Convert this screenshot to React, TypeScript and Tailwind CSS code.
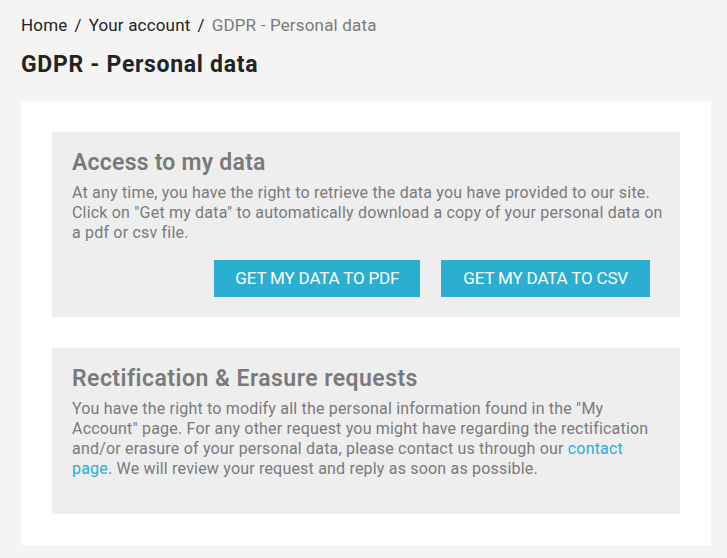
import React from 'react'

const btn =
  'h-[37px] bg-[#2aafd3] px-[21px] text-[17px] uppercase text-white tracking-[-0.01em]'

export default function App() {
  return (
    <div className="min-h-[558px] bg-[#f4f4f4] px-[21px] pt-[14px] font-['Roboto',sans-serif]">
      <nav className="flex items-center text-[17px] leading-[22px] tracking-[0.01em] text-[#232323]">
        <span>Home</span>
        <span className="mx-[7px]">/</span>
        <span>Your account</span>
        <span className="mx-[7px]">/</span>
        <span className="text-[#7a7a7a]">GDPR - Personal data</span>
      </nav>
      <h1 className="mt-[15px] text-[23px] font-bold leading-[28px] tracking-[0.03em] text-[#232323]">
        GDPR - Personal data
      </h1>
      <div className="mt-[22px] w-[690px] bg-white p-[31px] pr-[31px]">
        <section className="bg-[#eeeeee] pb-[20px] pl-[20px] pr-[16px] pt-[17px]">
          <h2 className="text-[23px] font-semibold leading-[28px] tracking-[0.01em] text-[#7a7a7a]">
            Access to my data
          </h2>
          <p className="mt-[6px] text-[16px] leading-[20px] tracking-[0.012em] text-[#7a7a7a]">
            At any time, you have the right to retrieve the data you have provided to our site.
            Click on "Get my data" to automatically download a copy of your personal data on a
            pdf or csv file.
          </p>
          <div className="mt-[17px] flex justify-end gap-[21px] pr-[14px]">
            <button className={btn}>Get my data to PDF</button>
            <button className={`${btn} px-[22px]`}>Get my data to CSV</button>
          </div>
        </section>
        <section className="mt-[31px] h-[166px] bg-[#eeeeee] pl-[20px] pr-[16px] pt-[17px]">
          <h2 className="text-[23px] font-semibold leading-[28px] tracking-[0.02em] text-[#7a7a7a]">
            Rectification &amp; Erasure requests
          </h2>
          <p className="mt-[6px] text-[16px] leading-[20px] tracking-[0.012em] text-[#7a7a7a]">
            You have the right to modify all the personal information found in the "My
            <br />
            Account" page. For any other request you might have regarding the rectification
            and/or erasure of your personal data, please contact us through our{' '}
            <a className="text-[#24b0d4]">contact page</a>. We will review your request and
            reply as soon as possible.
          </p>
        </section>
      </div>
    </div>
  )
}
